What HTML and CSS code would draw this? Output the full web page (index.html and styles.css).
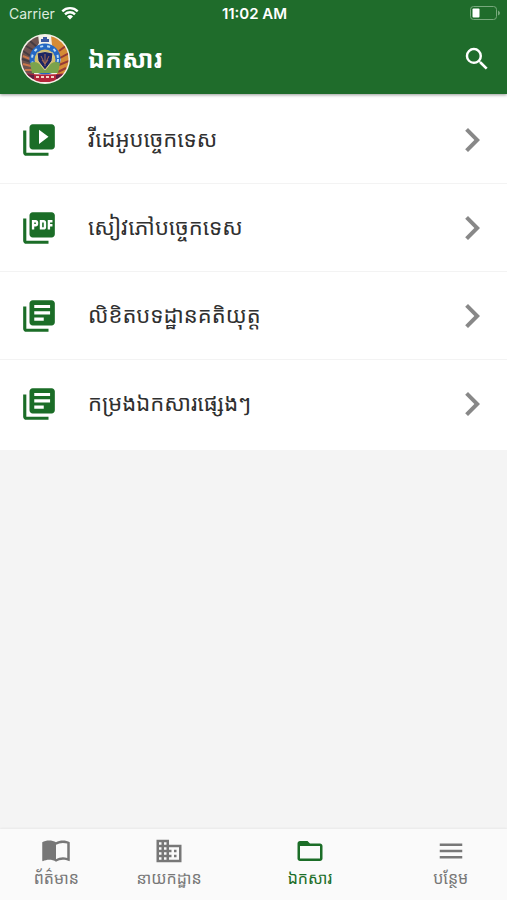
FILE: index.html
```html
<!DOCTYPE html>
<html lang="km">
<head>
    <meta charset="utf-8">
    <meta name="viewport" content="width=device-width, initial-scale=1">
    <title>ឯកសារ</title>
    <link rel="stylesheet" href="styles.css">
</head>
<body>
    <header class="header">
        <div class="status-bar">
            <div class="carrier">
                <span>Carrier</span>
                <svg class="wifi" viewBox="0 0 18 14">
                    <path d="M1.3 5.3a11 11 0 0 1 15.4 0M4 8.3a7.2 7.2 0 0 1 10 0" fill="none" stroke="currentColor" stroke-width="2.4"/>
                    <path d="M9 13.5l-3-3a4.3 4.3 0 0 1 6 0z" fill="currentColor"/>
                </svg>
            </div>
            <span class="time">11:02 AM</span>
            <div class="battery">
                <svg viewBox="0 0 30 14">
                    <rect x="0.5" y="0.5" width="26" height="13" rx="3" fill="none" stroke="#78a97d"/>
                    <path d="M28 4.5q2 1 2 2.500t-2 2.500z" fill="#78a97d"/>
                    <rect x="2.5" y="2.5" width="7" height="9" rx="1" fill="#fff"/>
                </svg>
            </div>
        </div>
        <div class="title-bar">
            <svg class="logo" viewBox="0 0 50 50">
                <defs>
                    <clipPath id="seal"><circle cx="25" cy="25" r="23.5"/></clipPath>
                </defs>
                <circle cx="25" cy="25" r="25" fill="#f4f1e8"/>
                <g clip-path="url(#seal)">
                    <path d="M18 0L0 7v36h15l-5-18 9-16z" fill="#6d5350"/>
                    <path d="M31 2l19 3v38H36l5-18-9-14z" fill="#d58b35"/>
                    <path d="M3 17l9 6M2 25l9 3M6 12l9 5M10 7l7 6" stroke="#463c42" stroke-width="2"/>
                    <path d="M39 17l8-6M40 24l9-5M39 31l10-4M38 38l8-4" stroke="#963a35" stroke-width="2"/>
                    <path d="M3 22l7 3M3 30l8 2M5 36l8 0" stroke="#c9764a" stroke-width="2"/>
                    <circle cx="25" cy="25" r="15.5" fill="#2468c4"/>
                    <circle cx="25" cy="25" r="13" fill="none" stroke="#b9dcf4" stroke-width="2" stroke-dasharray="3 4"/>
                    <circle cx="25" cy="26" r="10.5" fill="#d7c06a"/>
                    <path d="M10 29q7-3 11 3l4 5 4-5q4-6 11-3l-2 10H12z" fill="#7ba34c"/>
                    <path d="M17 19q8-3 16 0l-1 8-7 9-7-9z" fill="#1d2663" stroke="#d9cc8c"/>
                    <path d="M25 20v12M21 22l4 8 4-8M22 26l3 4 3-4" fill="none" stroke="#a56c55"/>
                    <path d="M21 8V5h2V3h4v2h2v3z" fill="#3857a1"/>
                    <path d="M4 39q21 3 42 0v9H4z" fill="#b3253a"/>
                    <path d="M4 39q5 2 10 2v4H6zM46 39q-5 2-10 2v4h8z" fill="#5b2144"/>
                    <path d="M16 43h19" stroke="#f3d4c4" stroke-width="2" stroke-dasharray="3 2"/>
                </g>
            </svg>
            <h1>ឯកសារ</h1>
            <button class="search" type="button" aria-label="Search">
                <svg viewBox="0 0 24 24"><path d="M15.5 14h-.79l-.28-.27A6.47 6.47 0 0 0 16 9.5 6.5 6.5 0 1 0 9.5 16c1.61 0 3.09-.59 4.23-1.57l.27.28v.79l5 4.99L20.49 19l-4.99-5zm-6 0C7.01 14 5 11.99 5 9.5S7.01 5 9.5 5 14 7.01 14 9.5 11.99 14 9.5 14z"/></svg>
            </button>
        </div>
    </header>

    <main class="documents">
        <a class="document" href="#videos">
            <svg class="document-icon" viewBox="0 0 24 24"><path d="M4 6H2v14c0 1.1.9 2 2 2h14v-2H4V6zm16-4H8c-1.1 0-2 .9-2 2v12c0 1.1.9 2 2 2h12c1.1 0 2-.9 2-2V4c0-1.1-.9-2-2-2zm-8 12.5v-9l6 4.5-6 4.5z"/></svg>
            <span class="name">វីដេអូបច្ចេកទេស</span>
            <svg class="chevron" viewBox="0 0 24 24"><path d="M10 6L8.59 7.41 13.17 12l-4.58 4.59L10 18l6-6z"/></svg>
        </a>
        <a class="document" href="#books">
            <svg class="document-icon" viewBox="0 0 24 24"><path d="M20 2H8c-1.1 0-2 .9-2 2v12c0 1.1.9 2 2 2h12c1.1 0 2-.9 2-2V4c0-1.1-.9-2-2-2zm-8.5 7.5c0 .83-.67 1.5-1.5 1.5H9v2H7.5V7H10c.83 0 1.5.67 1.5 1.5v1zm5 2c0 .83-.67 1.5-1.5 1.5h-2.5V7H15c.83 0 1.5.67 1.5 1.5v3zm4-3H19v1h1.5V11H19v2h-1.5V7h3v1.5zM9 9.5h1v-1H9v1zM4 6H2v14c0 1.1.9 2 2 2h14v-2H4V6zm10 5.5h1v-3h-1v3z" stroke="none"/></svg>
            <span class="name">សៀវភៅបច្ចេកទេស</span>
            <svg class="chevron" viewBox="0 0 24 24"><path d="M10 6L8.59 7.41 13.17 12l-4.58 4.59L10 18l6-6z"/></svg>
        </a>
        <a class="document" href="#legal">
            <svg class="document-icon" viewBox="0 0 24 24"><path d="M4 6H2v14c0 1.1.9 2 2 2h14v-2H4V6zm16-4H8c-1.1 0-2 .9-2 2v12c0 1.1.9 2 2 2h12c1.1 0 2-.9 2-2V4c0-1.1-.9-2-2-2zm-1 9H9V9h10v2zm-4 4H9v-2h6v2zm4-8H9V5h10v2z"/></svg>
            <span class="name">លិខិតបទដ្ឋានគតិយុត្ត</span>
            <svg class="chevron" viewBox="0 0 24 24"><path d="M10 6L8.59 7.41 13.17 12l-4.58 4.59L10 18l6-6z"/></svg>
        </a>
        <a class="document" href="#other">
            <svg class="document-icon" viewBox="0 0 24 24"><path d="M4 6H2v14c0 1.1.9 2 2 2h14v-2H4V6zm16-4H8c-1.1 0-2 .9-2 2v12c0 1.1.9 2 2 2h12c1.1 0 2-.9 2-2V4c0-1.1-.9-2-2-2zm-1 9H9V9h10v2zm-4 4H9v-2h6v2zm4-8H9V5h10v2z"/></svg>
            <span class="name">កម្រងឯកសារផ្សេងៗ</span>
            <svg class="chevron" viewBox="0 0 24 24"><path d="M10 6L8.59 7.41 13.17 12l-4.58 4.59L10 18l6-6z"/></svg>
        </a>
    </main>

    <nav class="tabs">
        <a class="tab" href="#news">
            <svg viewBox="0 0 24 24"><path fill-rule="evenodd" d="M12 5c-1.45-1.1-3.55-1.5-5.5-1.5S2.45 3.9 1 5v14.65c0 .25.25.5.5.5C2.85 19.5 4.8 19 6.5 19c1.95 0 4.05.4 5.5 1.5 1.35-.85 3.8-1.5 5.5-1.5 1.65 0 3.35.3 4.75 1.05.4.2.75-.1.75-.45V5c-1.45-1.1-3.55-1.5-5.5-1.5S13.45 3.9 12 5zm9 12.5c-1.1-.35-2.3-.5-3.5-.5-1.7 0-4.15.65-5.5 1.5V7c1.35-.85 3.8-1.5 5.5-1.5 1.2 0 2.4.15 3.5.5z"/></svg>
            <span>ព័ត៌មាន</span>
        </a>
        <a class="tab" href="#departments">
            <svg viewBox="0 0 24 24"><path d="M12 7V3H2v18h20V7H12zM6 19H4v-2h2v2zm0-4H4v-2h2v2zm0-4H4V9h2v2zm0-4H4V5h2v2zm4 12H8v-2h2v2zm0-4H8v-2h2v2zm0-4H8V9h2v2zm0-4H8V5h2v2zm10 12h-8v-2h2v-2h-2v-2h2v-2h-2V9h8v10zm-2-8h-2v2h2v-2zm0 4h-2v2h2v-2z"/></svg>
            <span>នាយកដ្ឋាន</span>
        </a>
        <a class="tab active" href="#documents">
            <svg viewBox="0 0 24 24"><path d="M20 6h-8l-2-2H4c-1.1 0-1.99.9-1.99 2L2 18c0 1.1.9 2 2 2h16c1.1 0 2-.9 2-2V8c0-1.1-.9-2-2-2zm0 12H4V8h16v10z"/></svg>
            <span>ឯកសារ</span>
        </a>
        <a class="tab" href="#more">
            <svg viewBox="0 0 24 24"><path d="M3 18h18v-2H3v2zm0-5h18v-2H3v2zm0-7v2h18V6H3z"/></svg>
            <span>បន្ថែម</span>
        </a>
    </nav>
</body>
</html>
```

FILE: styles.css
```css
* {
    box-sizing: border-box;
}
body {
    margin: 0;
    min-height: 100vh;
    display: flex;
    flex-direction: column;
    background: #f4f4f4;
    color: #303030;
    font-family: Inter, "Noto Sans Khmer", "Khmer OS", sans-serif;
}
svg {
    display: block;
    fill: currentColor;
}
a {
    color: inherit;
    text-decoration: none;
}
.header {
    background: #1f6c2b;
    color: #fff;
    box-shadow: 0 1px 3px rgba(0, 0, 0, 0.4);
    z-index: 1;
}
.status-bar {
    display: grid;
    grid-template-columns: 1fr auto 1fr;
    align-items: center;
    height: 26px;
    padding: 0 7px 0 9px;
    font-size: 14px;
}
.carrier {
    display: flex;
    align-items: center;
    gap: 6px;
    color: #dcebdd;
}
.wifi {
    width: 18px;
    height: 14px;
    color: #fff;
}
.time {
    font-size: 15px;
    font-weight: 600;
}
.battery svg {
    width: 30px;
    height: 14px;
    margin-left: auto;
}
.title-bar {
    display: flex;
    align-items: center;
    height: 68px;
    padding: 0 15px 2px 20px;
}
.logo {
    width: 50px;
    height: 50px;
}
h1 {
    flex: 1;
    margin: 0 0 0 18px;
    font-size: 25px;
    font-weight: 700;
    line-height: 40px;
}
.search {
    padding: 0;
    border: 0;
    background: none;
    color: #fff;
}
.search svg {
    width: 30px;
    height: 30px;
}
.documents {
    padding: 2px 0;
    background: #fff;
}
.document {
    display: flex;
    align-items: center;
    height: 88px;
    padding: 0 11px 0 20px;
    border-bottom: 1px solid #f3f3f3;
}
.document:last-child {
    border-bottom-color: transparent;
}
.document-icon {
    width: 38px;
    height: 38px;
    color: #1b6d27;
}
.name {
    flex: 1;
    margin-left: 30px;
    padding-bottom: 2px;
    font-size: 22px;
    line-height: 40px;
}
.chevron {
    width: 48px;
    height: 48px;
    color: #888;
}
.tabs {
    display: flex;
    margin-top: auto;
    height: 71px;
    background: #fafafa;
    box-shadow: 0 -1px 2px rgba(0, 0, 0, 0.05);
    color: #777;
}
.tab {
    flex: 2;
    display: flex;
    flex-direction: column;
    align-items: center;
    padding-top: 7px;
    font-size: 16px;
    line-height: 24px;
}
.tab svg {
    width: 30px;
    height: 30px;
}
.tab.active {
    flex: 3;
    color: #1b6d27;
}
```
